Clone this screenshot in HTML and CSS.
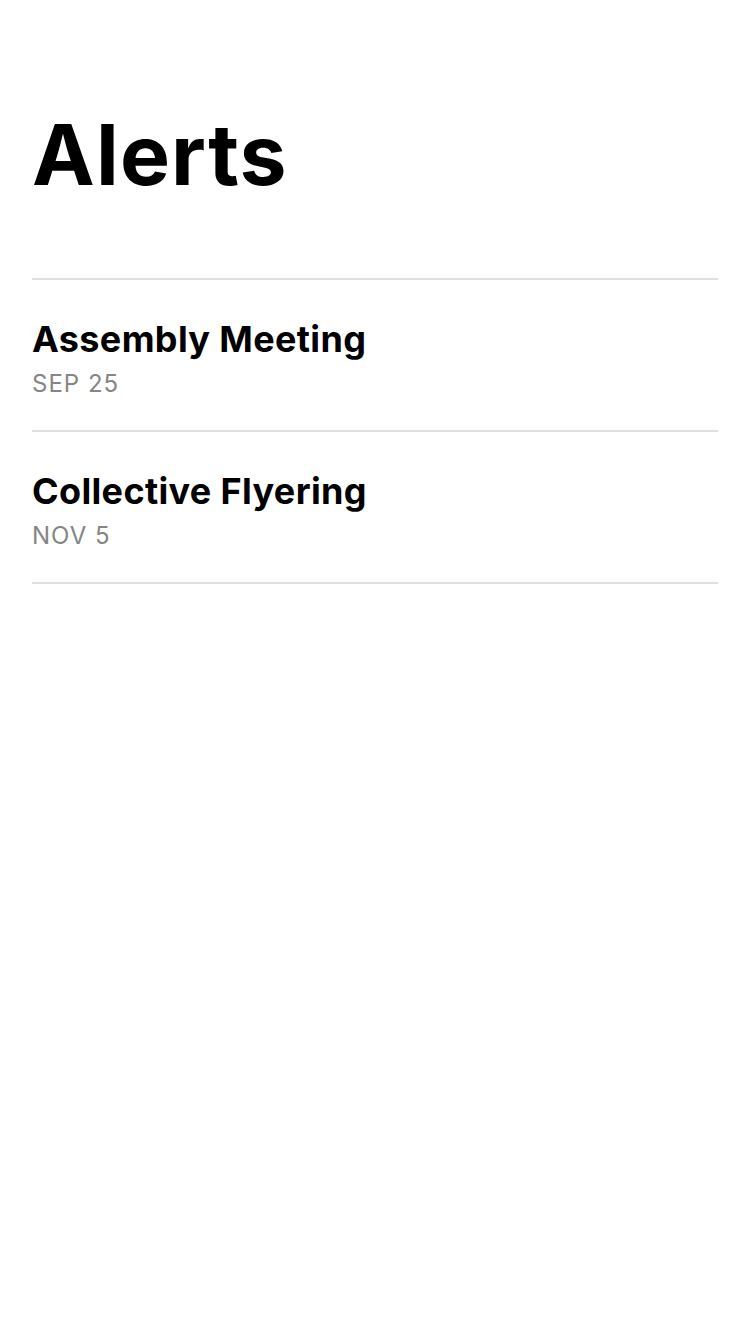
FILE: index.html
```html
<!DOCTYPE html>
<html lang="en">
<head>
<meta charset="utf-8">
<title>Alerts</title>
<link rel="stylesheet" href="styles.css">
</head>
<body>
<main class="screen">
  <h1 class="page-title">Alerts</h1>
  <ul class="alert-list">
    <li class="alert-row">
      <div class="alert-name">Assembly Meeting</div>
      <div class="alert-date">SEP 25</div>
    </li>
    <li class="alert-row">
      <div class="alert-name">Collective Flyering</div>
      <div class="alert-date">NOV 5</div>
    </li>
  </ul>
</main>
</body>
</html>
```

FILE: styles.css
```css
html, body {
  margin: 0;
  padding: 0;
  background: #ffffff;
}

body {
  font-family: Inter, "Liberation Sans", Arial, sans-serif;
  color: #000;
}

.screen {
  width: 750px;
  min-height: 1334px;
  box-sizing: border-box;
  padding: 111px 32px 0;
}

.page-title {
  margin: 0 0 79px;
  font-size: 84px;
  line-height: 88px;
  font-weight: 700;
  letter-spacing: 1.2px;
}

.alert-list {
  list-style: none;
  margin: 0;
  padding: 0;
  border-bottom: 2px solid #e0e0e0;
}

.alert-row {
  border-top: 2px solid #e0e0e0;
  padding: 37px 0 31px;
  display: flex;
  flex-direction: column;
  gap: 8px;
}

.alert-name {
  font-size: 36px;
  line-height: 44px;
  font-weight: 700;
  letter-spacing: 0.35px;
}

.alert-date {
  font-size: 24px;
  line-height: 30px;
  color: #858585;
  letter-spacing: 1px;
}
```
